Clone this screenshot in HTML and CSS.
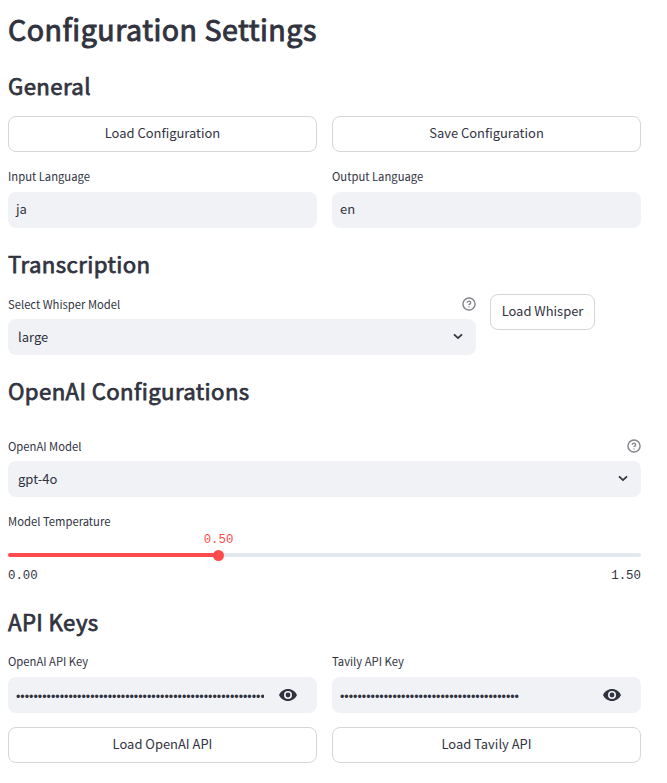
FILE: index.html
```html
<!DOCTYPE html>
<html lang="en">
<head>
<meta charset="utf-8">
<title>Configuration Settings</title>
<link rel="stylesheet" href="styles.css">
</head>
<body>
<svg class="defs" width="0" height="0">
  <symbol id="help" viewBox="0 0 24 24"><g fill="none" stroke="currentColor" stroke-width="2.4" stroke-linecap="round" stroke-linejoin="round"><circle cx="12" cy="12" r="10.400"/><path d="M9.1 9a3 3 0 0 1 5.8 1c0 2-3 3-3 3M12 17h.01"/></g></symbol>
  <symbol id="chevron" viewBox="0 0 10 7"><path d="M1 1.3 5 5.1 9 1.3" fill="none" stroke="currentColor" stroke-width="1.8"/></symbol>
  <symbol id="eye" viewBox="0 0 18 12"><path fill="currentColor" fill-rule="evenodd" d="M9 0C5 0 1.6 2.4 0 6c1.600 3.600 5 6 9 6s7.400-2.400 9-6C16.400 2.400 13 0 9 0Zm0 10a4 4 0 1 1 0-8 4 4 0 0 1 0 8Zm0-6.400a2.400 2.400 0 1 0 0 4.800 2.400 2.400 0 0 0 0-4.800Z"/></symbol>
</svg>
<main class="settings">
  <h1>Configuration Settings</h1>

  <h2>General</h2>
  <div class="columns">
    <button class="button">Load Configuration</button>
    <button class="button">Save Configuration</button>
  </div>
  <div class="columns languages">
    <div class="field"><div class="label">Input Language</div><div class="input">ja</div></div>
    <div class="field"><div class="label">Output Language</div><div class="input">en</div></div>
  </div>

  <h2 class="transcription">Transcription</h2>
  <div class="whisper">
    <div class="field">
      <div class="label">Select Whisper Model<svg class="help"><use href="#help"/></svg></div>
      <div class="input select">large<svg class="chevron"><use href="#chevron"/></svg></div>
    </div>
    <button class="button">Load Whisper</button>
  </div>

  <h2 class="openai">OpenAI Configurations</h2>
  <div class="field model">
    <div class="label">OpenAI Model<svg class="help"><use href="#help"/></svg></div>
    <div class="input select">gpt-4o<svg class="chevron"><use href="#chevron"/></svg></div>
  </div>
  <div class="temperature">
    <div class="label">Model Temperature</div>
    <div class="track"><div class="fill"><div class="thumb"><span class="value">0.50</span></div></div></div>
    <div class="range"><span>0.00</span><span>1.50</span></div>
  </div>

  <h2 class="keys">API Keys</h2>
  <div class="columns credentials">
    <div class="field"><div class="label">OpenAI API Key</div><div class="input"><span class="secret">•••••••••••••••••••••••••••••••••••••••••••••••••••••••••</span><svg class="eye"><use href="#eye"/></svg></div></div>
    <div class="field"><div class="label">Tavily API Key</div><div class="input"><span class="secret">•••••••••••••••••••••••••••••••••••••••••</span><svg class="eye"><use href="#eye"/></svg></div></div>
  </div>
  <div class="columns loaders">
    <button class="button">Load OpenAI API</button>
    <button class="button">Load Tavily API</button>
  </div>
</main>
</body>
</html>
```
FILE: styles.css
```css
* { box-sizing: border-box; }
body {
  margin: 0;
  background: #fff;
  color: #31333f;
  font-family: "Noto Sans CJK JP", "Noto Sans", sans-serif;
  font-size: 13px;
}
.defs { display: block; }
.settings { width: 641px; padding: 10px 0 0 8px; }
h1, h2 { margin: 0; font-weight: 400; white-space: nowrap; }
h1 { height: 40px; font-size: 28.6px; line-height: 38px; letter-spacing: 0.5px; -webkit-text-stroke: 0.95px; }
h2 { margin-top: 21px; font-size: 22.2px; line-height: 28px; height: 45px; letter-spacing: 0.39px; -webkit-text-stroke: 0.75px; }
.columns { display: grid; grid-template-columns: 309px 309px; gap: 15px; }
.button {
  height: 36px;
  padding: 0 0 2px;
  border: 1px solid #d6d6d9;
  border-radius: 8px;
  background: #fff;
  color: inherit;
  font: inherit;
  font-size: 12.95px;
  line-height: 20px;
}
.label {
  display: flex;
  align-items: center;
  justify-content: space-between;
  height: 20px;
  margin-bottom: 5px;
  font-size: 11.25px;
  line-height: 20px;
}
.languages { margin-top: 14px; }
.languages .label, .credentials .label { margin-bottom: 6px; }
.input {
  display: flex;
  align-items: center;
  height: 36px;
  padding: 0 8px 4px;
  border-radius: 8px;
  background: #f0f2f6;
}
.select { justify-content: space-between; padding: 0 13.500px 2px 10px; }
.help { width: 14px; height: 14px; color: #83848c; margin-right: 0.500px; }
.chevron { width: 10px; height: 7px; margin-top: 1px; }
.transcription { margin-top: 21px; }
.whisper { display: grid; grid-template-columns: 468px 105px; gap: 14px; align-items: start; }
.whisper .label, .model .label { line-height: 18px; padding-bottom: 1px; }
.whisper .help, .model .help { margin-top: 1px; }
.openai { margin-top: 21px; height: 44px; }
.model { margin-top: 16px; }
.temperature { margin-top: 14px; }
.temperature .label { margin-bottom: 22px; }
.track { height: 4px; border-radius: 2px; background: #e3e8f0; }
.fill { display: flex; justify-content: flex-end; align-items: center; width: 211px; height: 4px; border-radius: 2px; background: #ff4b4b; }
.thumb { position: relative; flex: none; width: 11px; height: 11px; margin-right: -5px; border-radius: 50%; background: #ff4b4b; }
.value { position: absolute; left: 50%; bottom: 13px; transform: translateX(-50%); color: #ff4b4b; line-height: 16px; }
.value, .range { font-family: "Liberation Mono", monospace; font-size: 12.4px; }
.range { display: flex; justify-content: space-between; margin-top: 11px; line-height: 16px; }
.keys { margin-top: 23px; height: 44px; }
.secret { width: 248px; margin-top: 7px; overflow: hidden; white-space: nowrap; font-family: "Liberation Sans", sans-serif; font-size: 12.48px; line-height: 18px; }
.eye { width: 18px; height: 12px; margin: 3px 0 0 15px; flex: none; }
.loaders { margin-top: 14px; }
```
